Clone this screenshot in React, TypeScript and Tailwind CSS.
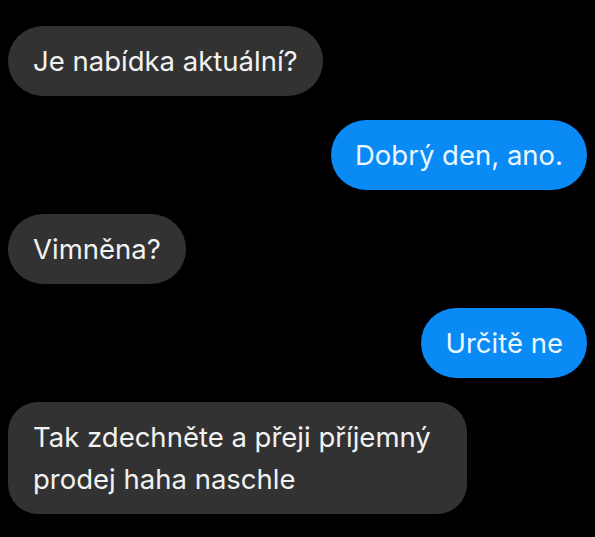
const messages = [
  { from: "them", text: "Je nabídka aktuální?" },
  { from: "me", text: "Dobrý den, ano." },
  { from: "them", text: "Vimněna?" },
  { from: "me", text: "Určitě ne" },
  { from: "them", text: "Tak zdechněte a přeji příjemný prodej haha naschle", long: true },
];

function Bubble({ from, text, long }: { from: string; text: string; long?: boolean }) {
  const mine = from === "me";
  return (
    <div className={mine ? "flex justify-end" : "flex justify-start"}>
      <div
        className={
          mine
            ? "max-w-[459px] rounded-[35px] bg-[#0a8af5] px-[24px] py-[14px] text-[27.5px] leading-[42px] text-[#eaf7ff]"
            : long
              ? "max-w-[459px] rounded-[30px] bg-[#323232] px-[25px] py-[14px] text-[27.5px] leading-[42px] text-[#f2f2f2]"
              : "max-w-[459px] rounded-[35px] bg-[#323232] px-[25px] py-[14px] text-[27.5px] leading-[42px] text-[#f2f2f2]"
        }
      >
        {text}
      </div>
    </div>
  );
}

export default function App() {
  return (
    <div
      className="flex h-[537px] w-[595px] flex-col gap-6 overflow-hidden bg-black px-2 pt-[26px]"
      style={{ fontFamily: "Inter, 'Noto Sans', sans-serif" }}
    >
      {messages.map((m, i) => (
        <Bubble key={i} from={m.from} text={m.text} long={m.long} />
      ))}
    </div>
  );
}
